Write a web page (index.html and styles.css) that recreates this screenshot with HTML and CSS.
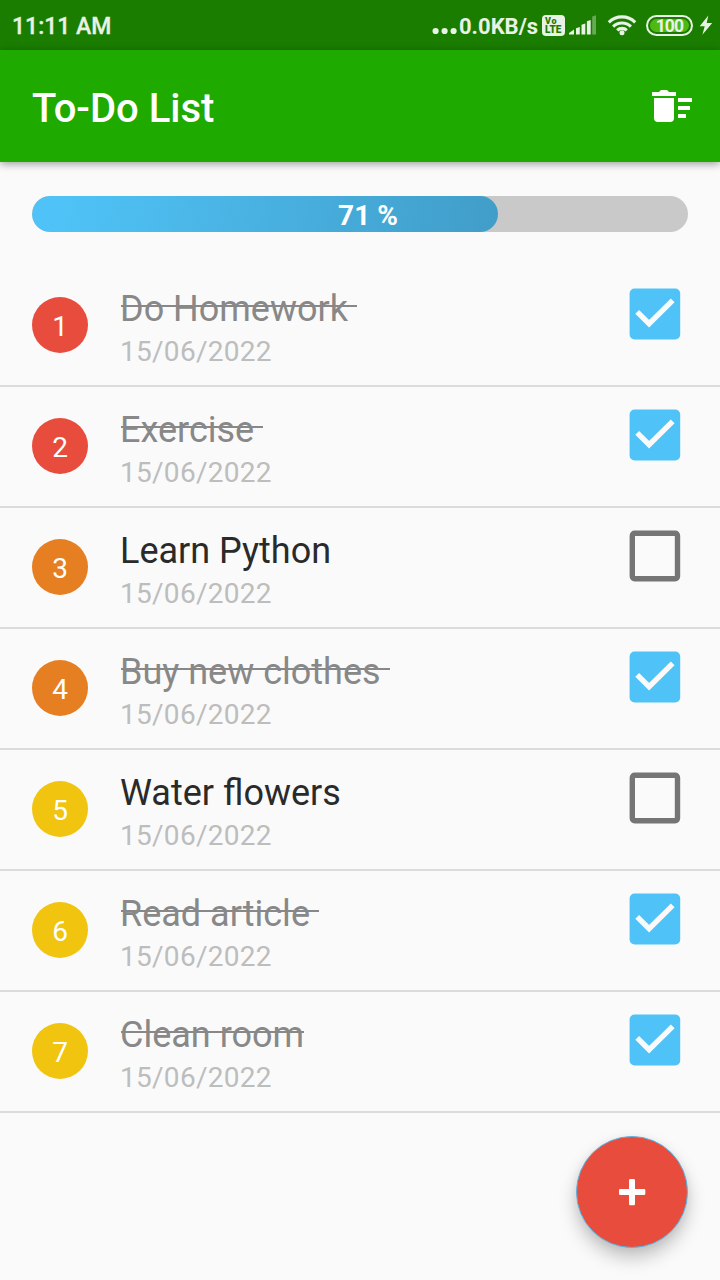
FILE: index.html
```html
<!DOCTYPE html>
<html lang="en">
<head>
<meta charset="utf-8">
<title>To-Do List</title>
<link rel="stylesheet" href="styles.css">
</head>
<body>
<svg class="defs" aria-hidden="true">
  <symbol id="checked" viewBox="0 0 52 52">
    <rect x="0.6" y="0.6" width="50.6" height="50.8" rx="5" fill="#4fc3f7"/>
    <path d="M8.2 23.9 20.1 35.6 43.7 12.4" fill="none" stroke="#fafafa" stroke-width="5.4"/>
  </symbol>
  <symbol id="unchecked" viewBox="0 0 52 52">
    <rect x="3.3" y="3.3" width="45.2" height="45.4" rx="2.4" fill="none" stroke="#757575" stroke-width="5.4"/>
  </symbol>
</svg>
<header class="status">
  <span class="clock">11:11 AM</span>
  <div class="indicators">
    <svg class="dots" width="26" height="26" viewBox="0 0 26 26"><g fill="#e8f2e5"><circle cx="3.6" cy="18" r="3.1"/><circle cx="12.6" cy="18" r="3.1"/><circle cx="21.6" cy="18" r="3.1"/></g></svg>
    <span class="speed">0.0KB/s</span>
    <span class="volte"><span class="vo">Vo</span><span class="lte">LTE</span></span>
    <svg class="signal" width="28" height="20" viewBox="0 0 28 20"><g fill="#e8f2e5"><path d="M0 19.5V18l5-3.5v5z"/><path d="M7 19.5v-6.2l3.8-1.2v7.4z"/><path d="M12.5 19.5V9.8l3.8-1.2v10.9z"/><path d="M17.9 19.5V6.3l3.8-1.2v14.4z"/><path d="M23.2 19.5V1.5L27 .2v19.3z" opacity=".38"/></g></svg>
    <svg class="wifi" width="30" height="22" viewBox="0 0 30 22"><g fill="none" stroke="#e8f2e5" stroke-width="3.1"><path d="M1.8 8.3a18.8 18.8 0 0 1 26.4 0"/><path d="M6.1 12.6a12.7 12.7 0 0 1 17.8 0"/><path d="M10.2 16.4a6.8 6.8 0 0 1 9.6 0"/></g><circle cx="15" cy="18.8" r="2.5" fill="#e8f2e5"/></svg>
    <span class="battery"><span class="charge">100</span></span>
    <svg class="bolt" width="14" height="20" viewBox="0 0 14 20"><path d="M9.3.5.7 11.3h5L3.4 19.7 13.2 8H7.7z" fill="#e8f2e5"/></svg>
  </div>
</header>
<div class="appbar">
  <h1>To-Do List</h1>
  <svg width="40" height="32" viewBox="0 0 40 32"><path fill="#fff" d="M2 8h20v20a4 4 0 0 1-4 4H6a4 4 0 0 1-4-4zM0 2h7l2-2h6l2 2h7v4H0zM26 8h14v4H26zM26 16h12v4H26zM26 24h8v4h-8z"/></svg>
</div>
<main>
  <div class="progress"><div class="fill" style="width:71%"></div><span class="percent">71 %</span></div>
  <ul class="tasks">
    <li class="task done"><span class="num red">1</span><div class="info"><span class="name">Do Homework </span><span class="date">15/06/2022</span></div><svg class="check"><use href="#checked"/></svg></li>
    <li class="task done"><span class="num red">2</span><div class="info"><span class="name">Exercise </span><span class="date">15/06/2022</span></div><svg class="check"><use href="#checked"/></svg></li>
    <li class="task"><span class="num orange">3</span><div class="info"><span class="name">Learn Python</span><span class="date">15/06/2022</span></div><svg class="check"><use href="#unchecked"/></svg></li>
    <li class="task done"><span class="num orange">4</span><div class="info"><span class="name">Buy new clothes </span><span class="date">15/06/2022</span></div><svg class="check"><use href="#checked"/></svg></li>
    <li class="task"><span class="num yellow">5</span><div class="info"><span class="name">Water flowers</span><span class="date">15/06/2022</span></div><svg class="check"><use href="#unchecked"/></svg></li>
    <li class="task done"><span class="num yellow">6</span><div class="info"><span class="name">Read article </span><span class="date">15/06/2022</span></div><svg class="check"><use href="#checked"/></svg></li>
    <li class="task done"><span class="num yellow">7</span><div class="info"><span class="name">Clean room</span><span class="date">15/06/2022</span></div><svg class="check"><use href="#checked"/></svg></li>
  </ul>
</main>
<button class="fab" aria-label="Add task"><svg width="28" height="28" viewBox="0 0 28 28"><g fill="#fff"><rect x="1" y="11" width="26.3" height="6" rx="1.3"/><rect x="11" y="1" width="6" height="26.3" rx="1.3"/></g></svg></button>
</body>
</html>
```

FILE: styles.css
```css
* { box-sizing: border-box; }
body {
  margin: 0;
  height: 1280px;
  overflow: hidden;
  background: #fafafa;
  font-family: Roboto, "Liberation Sans", sans-serif;
}
.defs { position: absolute; width: 0; height: 0; }
.status {
  height: 50px;
  padding: 0 7px 0 12px;
  display: flex;
  align-items: center;
  justify-content: space-between;
  background: #1a7d00;
  color: #e8f2e5;
  font-size: 23px;
  font-weight: 700;
}
.clock { padding-top: 2px; font-weight: 500; -webkit-text-stroke: 0.3px; }
.indicators { display: flex; align-items: center; }
.dots { margin-top: 2px; }
.speed { width: 80px; margin-left: 1px; padding-top: 2px; font-size: 22px; white-space: nowrap; }
.volte {
  width: 23px;
  height: 21px;
  margin-left: 3px;
  padding: 2px 0 0 3px;
  border-radius: 4px;
  background: #e8f2e5;
  color: #1a7d00;
  display: flex;
  flex-direction: column;
  font-weight: 900;
}
.vo { font-size: 9px; line-height: 8px; letter-spacing: 0.7px; }
.lte { font-size: 10px; line-height: 10px; }
.signal { margin-left: 4px; }
.wifi { margin-left: 10px; }
.battery {
  width: 47px;
  height: 21px;
  margin-left: 9px;
  padding: 2px;
  border: 2px solid #e8f2e5;
  border-radius: 11px;
}
.charge {
  display: block;
  height: 13px;
  border-radius: 7px;
  background: #4fb913;
  font-size: 17.5px;
  line-height: 14px;
  letter-spacing: -0.8px;
  text-align: center;
}
.bolt { margin-left: 6px; }
.appbar {
  height: 112px;
  padding: 0 28px 0 32px;
  display: flex;
  align-items: center;
  justify-content: space-between;
  background: #1faa00;
  box-shadow: 0 2px 8px rgba(0, 0, 0, 0.38);
}
h1 { margin: 0; padding-top: 6px; color: #fff; font-size: 40px; font-weight: 500; line-height: 48px; }
.progress {
  position: relative;
  height: 36px;
  margin: 34px 32px;
  border-radius: 18px;
  background: #c9c9c9;
  overflow: hidden;
}
.fill { height: 100%; border-radius: 18px; background: linear-gradient(100deg, #4fc3f7 5%, #419dc8); }
.percent {
  position: absolute;
  inset: 0;
  padding: 1px 0 0 16px;
  color: #fff;
  font-size: 28px;
  font-weight: 700;
  line-height: 38px;
  text-align: center;
}
.tasks { list-style: none; margin: 0; padding: 0; }
.task {
  height: 121px;
  padding: 22px 40px 0 32px;
  display: flex;
  align-items: flex-start;
  border-bottom: 2px solid #dbdbdb;
}
.num {
  width: 56px;
  height: 56px;
  margin: 9px 32px 0 0;
  border-radius: 50%;
  color: #fff;
  font-size: 28px;
  line-height: 59px;
  text-align: center;
}
.red { background: #e84c3d; }
.orange { background: #e67e22; }
.yellow { background: #f1c40f; }
.info { flex: 1; display: flex; flex-direction: column; align-items: flex-start; }
.name {
  position: relative;
  color: #2a2a2a;
  font-size: 36px;
  line-height: 42px;
  white-space: pre;
}
.done .name { color: #888; }
.done .name::after {
  content: "";
  position: absolute;
  left: 1px;
  right: 0;
  top: 17px;
  height: 2px;
  background: #888;
}
.date { color: #bdbdbd; font-size: 28px; line-height: 44px; letter-spacing: 0.28px; }
.check { width: 52px; height: 52px; margin-right: -1px; }
.fab {
  position: absolute;
  left: 576px;
  top: 1136px;
  width: 112px;
  height: 112px;
  padding: 0;
  border: 1px solid #56b9e8;
  border-radius: 50%;
  background: #e84c3d;
  box-shadow: 0 10px 18px rgba(0, 0, 0, 0.22), 0 2px 8px rgba(0, 0, 0, 0.06);
  display: flex;
  align-items: center;
  justify-content: center;
}
```
